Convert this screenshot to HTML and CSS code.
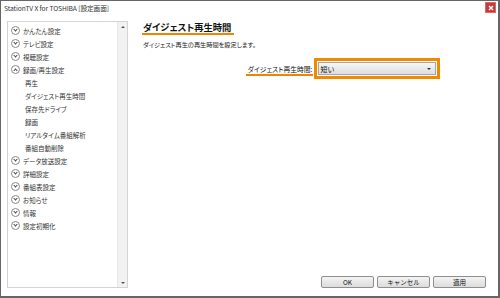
FILE: index.html
```html
<!DOCTYPE html>
<html lang="ja">
<head>
  <meta charset="UTF-8" />
  <title>StationTV X for TOSHIBA [設定画面]</title>
  <link rel="stylesheet" href="styles.css">
</head>
<body>
  <div class="window">
    <div class="title-bar">
      <span class="title">StationTV X for TOSHIBA [設定画面]</span>
      <div class="close-btn">
        <svg width="6" height="6" viewBox="0 0 6 6"><path d="M1 1 L5 5 M5 1 L1 5" stroke="#fff" stroke-width="1.4"/></svg>
      </div>
    </div>

    <div class="content">
      <div class="tree">
        <ul class="tree-list">
          <li class="node"><i class="toggle"></i>かんたん設定</li>
          <li class="node"><i class="toggle"></i>テレビ設定</li>
          <li class="node"><i class="toggle"></i>視聴設定</li>
          <li class="node open"><i class="toggle"></i>録画/再生設定</li>
          <li class="leaf">再生</li>
          <li class="leaf">ダイジェスト再生時間</li>
          <li class="leaf">保存先ドライブ</li>
          <li class="leaf">録画</li>
          <li class="leaf">リアルタイム番組解析</li>
          <li class="leaf">番組自動削除</li>
          <li class="node"><i class="toggle"></i>データ放送設定</li>
          <li class="node"><i class="toggle"></i>詳細設定</li>
          <li class="node"><i class="toggle"></i>番組表設定</li>
          <li class="node"><i class="toggle"></i>お知らせ</li>
          <li class="node"><i class="toggle"></i>情報</li>
          <li class="node"><i class="toggle"></i>設定初期化</li>
        </ul>
        <div class="scrollbar">
          <span class="arrow up"></span>
          <span class="arrow down"></span>
        </div>
      </div>

      <div class="main">
        <h1 class="page-title">ダイジェスト再生時間</h1>
        <p class="desc">ダイジェスト再生の再生時間を設定します。</p>

        <div class="form-row">
          <label class="field-label">ダイジェスト再生時間:</label>
          <div class="field">
            <div class="select-wrap">
              <div class="select">
                <span>短い</span>
                <span class="caret"></span>
              </div>
            </div>
          </div>
        </div>

        <div class="buttons">
          <button class="btn">OK</button>
          <button class="btn">キャンセル</button>
          <button class="btn">適用</button>
        </div>
      </div>
    </div>
  </div>
</body>
</html>
```

FILE: styles.css
```css
html, body {
  margin: 0;
  height: 100%;
  overflow: hidden;
}
body {
  font-family: "Noto Sans CJK JP", "Noto Sans", sans-serif;
  font-feature-settings: "palt";
  background: #fff;
  color: #222;
}
.window {
  box-sizing: border-box;
  width: 500px;
  height: 298px;
  border: 1px solid #666;
  border-right-width: 2px;
  border-bottom-width: 2px;
  display: flex;
  flex-direction: column;
}
.title-bar {
  height: 17px;
  display: flex;
  align-items: center;
  justify-content: space-between;
  padding: 0 2px 0 3px;
  flex-shrink: 0;
}
.title {
  font-size: 6.7px;
  color: #333;
  letter-spacing: -0.1px;
  margin-top: -3px;
}
.close-btn {
  width: 9px;
  height: 9px;
  background: #c8393c;
  border: 1px solid #d96a6c;
  display: flex;
  align-items: center;
  justify-content: center;
  margin-top: -4px;
}
.content {
  flex: 1;
  display: flex;
  padding: 3px 10px 8px 6px;
}
.tree {
  width: 119px;
  border: 1px solid #d4d4d4;
  display: flex;
  background: #fff;
}
.tree-list {
  flex: 1;
  list-style: none;
  margin: 0;
  padding: 2px 0 0 2px;
}
.tree-list li {
  height: 13px;
  display: flex;
  align-items: center;
  font-size: 6.5px;
  color: #333;
}
.tree-list .leaf {
  padding-left: 15px;
}
.toggle {
  box-sizing: border-box;
  width: 9px;
  height: 9px;
  border: 1px solid #8a8a8a;
  border-radius: 50%;
  margin: 0 3px 0 1px;
  position: relative;
}
.toggle::after {
  content: "";
  position: absolute;
  left: 2px;
  top: 1px;
  width: 2px;
  height: 2px;
  border-right: 1px solid #444;
  border-bottom: 1px solid #444;
  transform: rotate(45deg);
}
.open .toggle::after {
  top: 3px;
  transform: rotate(-135deg);
}
.scrollbar {
  width: 9px;
  background: #f2f2f2;
  border-left: 1px solid #e6e6e6;
  display: flex;
  flex-direction: column;
  justify-content: space-between;
  align-items: center;
  padding: 4px 0 3px;
}
.arrow {
  width: 0;
  height: 0;
  border-left: 2px solid transparent;
  border-right: 2px solid transparent;
}
.arrow.up {
  border-bottom: 2px solid #555;
}
.arrow.down {
  border-top: 2px solid #555;
}
.main {
  flex: 1;
  display: flex;
  flex-direction: column;
  padding-left: 15px;
}
.page-title {
  align-self: flex-start;
  margin: 0;
  font-size: 9.3px;
  font-weight: bold;
  color: #111;
  line-height: 12px;
  padding: 0 3px 0 1px;
  border-bottom: 2px solid #f08300;
  margin-left: -1px;
}
.desc {
  margin: 5px 0 0;
  font-size: 6.2px;
  color: #222;
}
.form-row {
  display: grid;
  grid-template-columns: 1fr 1fr;
  align-items: center;
  margin-top: 9px;
  margin-left: -4px;
}
.field-label {
  justify-self: end;
  font-size: 6.8px;
  color: #111;
  border-bottom: 2px solid #f08300;
  padding-left: 2px;
  margin-top: 3px;
  margin-right: 1px;
  line-height: 9px;
}
.select-wrap {
  width: 118px;
  border: 3px solid #f28a00;
  padding: 1px;
}
.select {
  height: 11px;
  border: 1px solid #a6a6a6;
  background: linear-gradient(#f6f6f6, #dedede);
  display: flex;
  align-items: center;
  justify-content: space-between;
  padding: 0 4px 0 2px;
  font-size: 7px;
  color: #111;
}
.caret {
  width: 0;
  height: 0;
  border-left: 2px solid transparent;
  border-right: 2px solid transparent;
  border-top: 2px solid #333;
}
.buttons {
  margin-top: auto;
  display: flex;
  justify-content: flex-end;
  gap: 3px;
  padding-right: 2px;
}
.btn {
  width: 53px;
  height: 12px;
  padding: 0;
  font-family: inherit;
  font-size: 6.5px;
  color: #111;
  background: linear-gradient(#f4f4f4, #dcdcdc);
  border: 1px solid #8f8f8f;
  border-radius: 2px;
  line-height: 10px;
}
```
